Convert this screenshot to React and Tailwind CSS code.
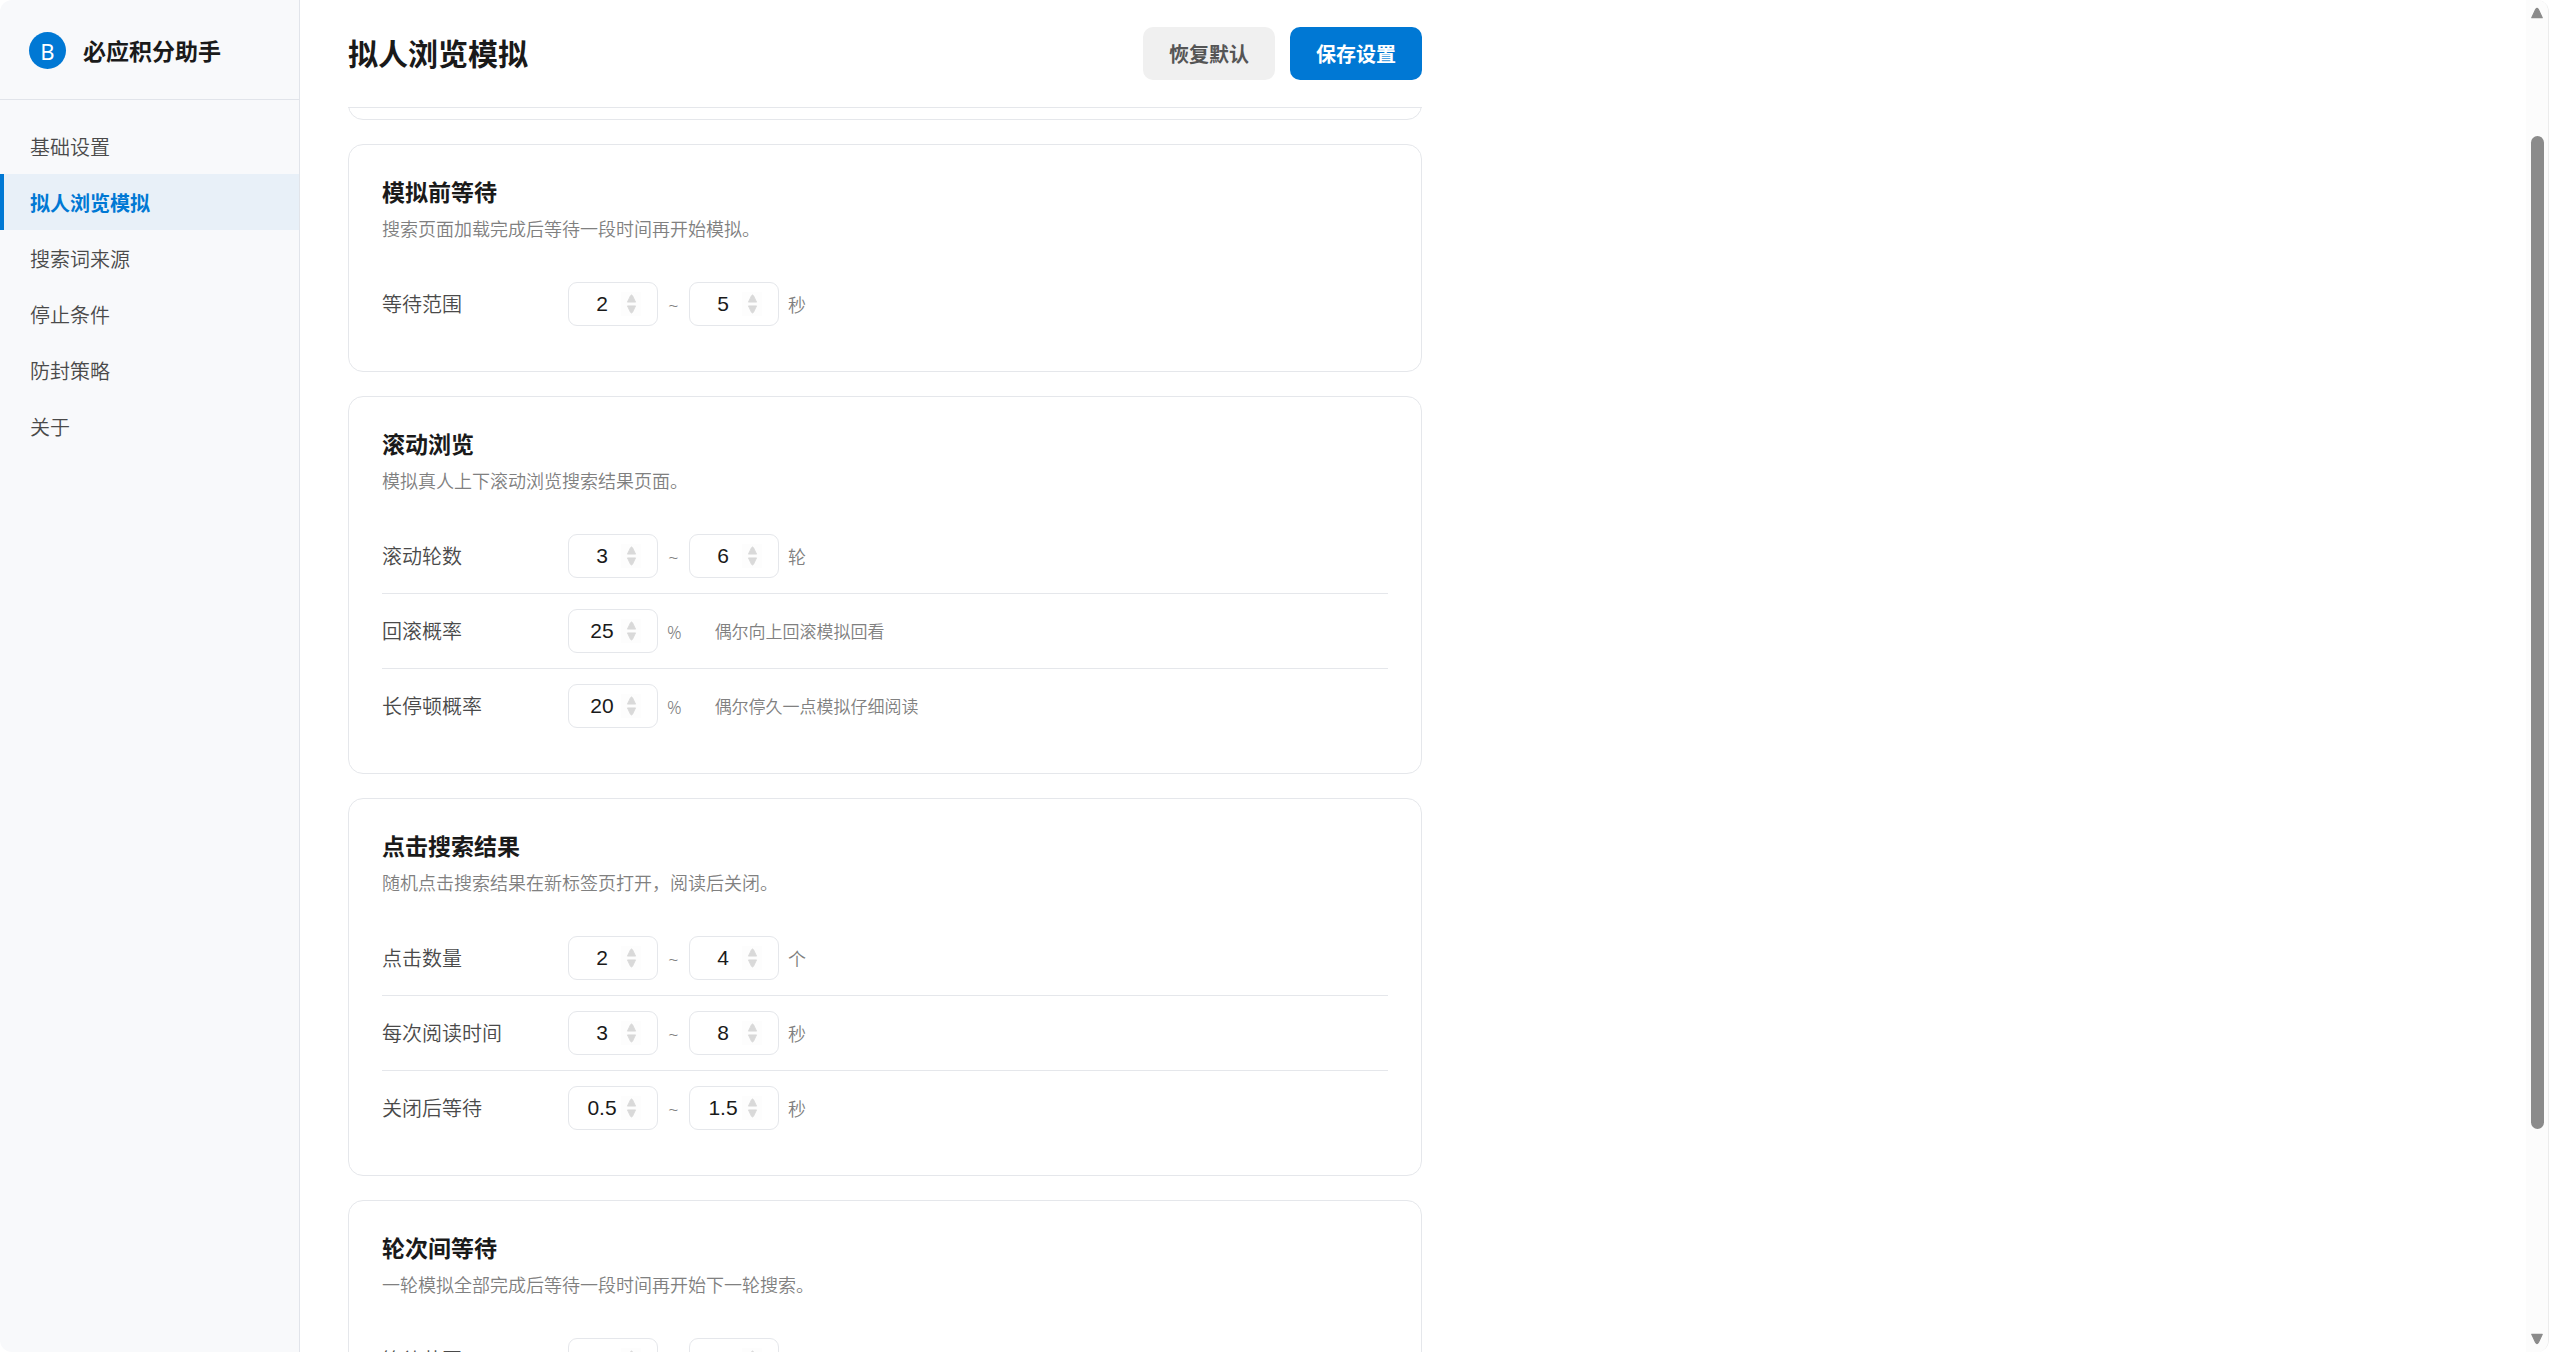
import React from "react";

const NAV = ["基础设置", "拟人浏览模拟", "搜索词来源", "停止条件", "防封策略", "关于"];

const CARDS = [
  {
    title: "模拟前等待",
    desc: "搜索页面加载完成后等待一段时间再开始模拟。",
    rows: [{ label: "等待范围", values: ["2", "5"], unit: "秒" }],
  },
  {
    title: "滚动浏览",
    desc: "模拟真人上下滚动浏览搜索结果页面。",
    rows: [
      { label: "滚动轮数", values: ["3", "6"], unit: "轮" },
      { label: "回滚概率", values: ["25"], unit: "%", hint: "偶尔向上回滚模拟回看" },
      { label: "长停顿概率", values: ["20"], unit: "%", hint: "偶尔停久一点模拟仔细阅读" },
    ],
  },
  {
    title: "点击搜索结果",
    desc: "随机点击搜索结果在新标签页打开，阅读后关闭。",
    rows: [
      { label: "点击数量", values: ["2", "4"], unit: "个" },
      { label: "每次阅读时间", values: ["3", "8"], unit: "秒" },
      { label: "关闭后等待", values: ["0.5", "1.5"], unit: "秒" },
    ],
  },
  {
    title: "轮次间等待",
    desc: "一轮模拟全部完成后等待一段时间再开始下一轮搜索。",
    rows: [{ label: "等待范围", values: ["5", "10"], unit: "秒" }],
  },
];

function Triangle({ down, className }) {
  return (
    <svg viewBox="0 0 12 10" className={className} aria-hidden="true">
      <path
        d={down ? "M1.5 1h9L7.2 8Q6 9.8 4.8 8Z" : "M1.5 9h9L7.2 2Q6 .2 4.8 2Z"}
        fill="currentColor"
        stroke="currentColor"
        strokeLinejoin="round"
      />
    </svg>
  );
}

function NumberField({ id, value, label }) {
  return (
    <span className="flex h-11 w-[90px] shrink-0 items-center rounded-[9px] border border-[#e5e7eb] bg-white pl-[14px]">
      <input
        id={id}
        aria-label={label}
        type="number"
        step="any"
        defaultValue={value}
        className="h-6 w-[38px] appearance-none bg-transparent text-center font-['Liberation_Sans',sans-serif] text-[21px] leading-6 font-normal text-[#1a1a1a] outline-none [-moz-appearance:textfield] [&::-webkit-inner-spin-button]:appearance-none [&::-webkit-inner-spin-button]:m-0"
      />
      <span className="flex h-6 w-5 flex-col items-center justify-center gap-[2px] bg-[#fdfdfd] text-[#d9d9d9]">
        <button type="button" aria-label={label + " 增加"} className="block">
          <Triangle className="h-[9px] w-[11px]" />
        </button>
        <button type="button" aria-label={label + " 减少"} className="block">
          <Triangle down className="h-[9px] w-[11px]" />
        </button>
      </span>
    </span>
  );
}

function Row({ id, row }) {
  return (
    <div className="flex items-center gap-[9px] border-b border-[#e5e7eb] py-[15px] last:border-b-0">
      <label htmlFor={id + "-0"} className="w-[177px] shrink-0 pt-[2px] text-[20px] leading-7 text-[#4a4a4a]">
        {row.label}
      </label>
      <NumberField id={id + "-0"} value={row.values[0]} label={row.label} />
      {row.values.length > 1 && (
        <>
          <span className="w-[13px] pt-[2px] text-center text-[18px] leading-7 text-[#808080]">~</span>
          <NumberField id={id + "-1"} value={row.values[1]} label={row.label + " 上限"} />
        </>
      )}
      <span className="pt-[2px] text-[18px] leading-7 text-[#808080]">{row.unit}</span>
      {row.hint && <span className="ml-6 pt-[2px] text-[17px] leading-7 text-[#808080]">{row.hint}</span>}
    </div>
  );
}

function Card({ index, card }) {
  return (
    <section className="shrink-0 rounded-[15px] border border-[#e5e7eb] bg-white px-[33px] py-[30px]">
      <h2 className="text-[23px] leading-[34px] font-bold text-[#1a1a1a]">{card.title}</h2>
      <p className="mt-[6px] mb-6 text-[18px] leading-7 text-[#808080]">{card.desc}</p>
      {card.rows.map((row, i) => (
        <Row key={i} id={"card" + index + "-row" + i} row={row} />
      ))}
    </section>
  );
}

function Sidebar() {
  return (
    <aside className="flex w-[300px] shrink-0 flex-col border-r border-[#e1e4ea] bg-[#f8f9fb]">
      <div className="flex items-center gap-[17px] border-b border-[#e1e4ea] pt-8 pr-4 pb-[30px] pl-[29px]">
        <span className="flex size-[37px] items-center justify-center rounded-full bg-[#0078d4] text-[22px] leading-none font-normal text-white">
          B
        </span>
        <span className="text-[23px] leading-[34px] font-bold text-[#1a1a1a]">必应积分助手</span>
      </div>
      <nav className="flex flex-col pt-[18px]">
        {NAV.map((item, i) => (
          <a
            key={item}
            href="#"
            className={
              i === 1
                ? "flex h-14 items-center border-l-4 border-[#0078d4] bg-[#e8f0f8] pt-[3px] pl-[26px] text-[20px] font-bold text-[#0078d4]"
                : "flex h-14 items-center border-l-4 border-transparent pt-[3px] pl-[26px] text-[20px] text-[#4a4a4a]"
            }
          >
            {item}
          </a>
        ))}
      </nav>
    </aside>
  );
}

function ScrollRail() {
  return (
    <div className="flex w-[22px] shrink-0 flex-col items-center bg-[#fcfcfc] py-[7px] text-[#8b8b8b]" aria-hidden="true">
      <Triangle className="h-3 w-[14px]" />
      <div className="grow-[117]" />
      <div className="w-[13px] grow-[993] rounded-full bg-[#8b8b8b]" />
      <div className="grow-[204]" />
      <Triangle down className="h-3 w-[14px]" />
    </div>
  );
}

export default function App() {
  return (
    <div className="flex h-screen overflow-hidden rounded-xl border-r border-[#ececec] bg-white font-['Noto_Sans','Noto_Sans_CJK_SC',sans-serif] font-[350]">
      <Sidebar />
      <main className="flex min-w-0 grow flex-col pl-12">
        <div className="flex min-h-0 w-full max-w-[1074px] grow flex-col">
          <header className="flex shrink-0 items-center gap-[15px] border-b border-[#e5e7eb] py-[27px]">
            <h1 className="grow text-[30px] leading-[44px] font-bold text-[#1a1a1a]">拟人浏览模拟</h1>
            <button type="button" className="h-[53px] w-[132px] rounded-[10px] bg-[#f0f0f0] pt-[2px] text-[20px] font-bold text-[#555]">
              恢复默认
            </button>
            <button type="button" className="h-[53px] w-[132px] rounded-[10px] bg-[#0078d4] pt-[2px] text-[20px] font-bold text-white">
              保存设置
            </button>
          </header>
          <div className="flex min-h-0 grow flex-col gap-6 overflow-hidden">
            <div className="-mt-5 h-8 shrink-0 rounded-b-[15px] border border-[#e5e7eb]" />
            {CARDS.map((card, i) => (
              <Card key={card.title} index={i} card={card} />
            ))}
          </div>
        </div>
      </main>
      <ScrollRail />
    </div>
  );
}
